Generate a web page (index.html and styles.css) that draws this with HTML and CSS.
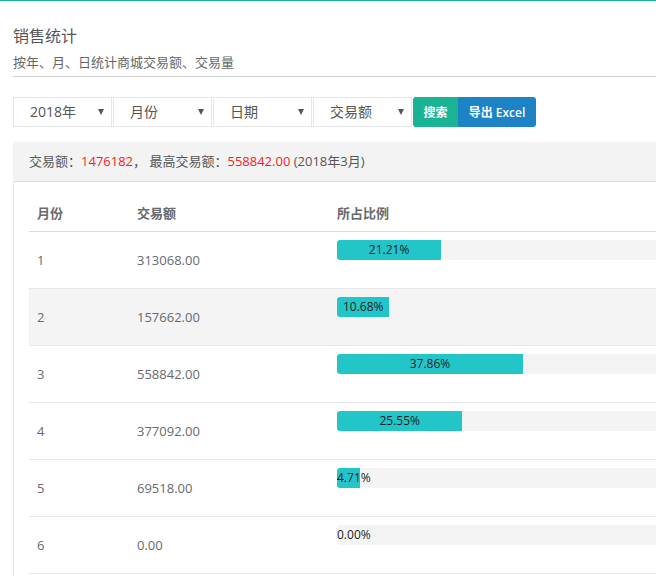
FILE: index.html
```html
<!DOCTYPE html>
<html lang="zh-CN">
<head>
<meta charset="utf-8">
<title>销售统计</title>
<link rel="stylesheet" href="styles.css">
</head>
<body>
<div class="page">
  <div class="inner">
    <div class="head">
      <h2 class="title">销售统计</h2>
      <p class="subtitle">按年、月、日统计商城交易额、交易量</p>
    </div>
    <div class="toolbar">
      <div class="select"><span>2018年</span><i class="caret"></i></div>
      <div class="select"><span>月份</span><i class="caret"></i></div>
      <div class="select"><span>日期</span><i class="caret"></i></div>
      <div class="select"><span>交易额</span><i class="caret"></i></div>
      <div class="btns">
        <button class="btn btn-green">搜索</button>
        <button class="btn btn-blue">导出 Excel</button>
      </div>
    </div>
    <div class="ibox">
      <div class="ibox-title">交易额：<span class="red">1476182</span>， 最高交易额：<span class="red">558842.00</span> (2018年3月)</div>
      <div class="ibox-content">
        <table class="table">
          <colgroup><col class="c1"><col class="c2"><col class="c3"></colgroup>
          <thead>
            <tr><th>月份</th><th>交易额</th><th>所占比例</th></tr>
          </thead>
          <tbody>
            <tr><td>1</td><td>313068.00</td><td><div class="progress"><div class="bar" style="width:21.21%">21.21%</div></div></td></tr>
            <tr class="hover"><td>2</td><td>157662.00</td><td><div class="progress"><div class="bar" style="width:10.68%">10.68%</div></div></td></tr>
            <tr><td>3</td><td>558842.00</td><td><div class="progress"><div class="bar" style="width:37.86%">37.86%</div></div></td></tr>
            <tr><td>4</td><td>377092.00</td><td><div class="progress"><div class="bar" style="width:25.55%">25.55%</div></div></td></tr>
            <tr><td>5</td><td>69518.00</td><td><div class="progress"><div class="bar" style="width:4.71%">4.71%</div></div></td></tr>
            <tr><td>6</td><td>0.00</td><td><div class="progress"><div class="bar" style="width:0%">0.00%</div></div></td></tr>
          </tbody>
        </table>
      </div>
    </div>
  </div>
</div>
</body>
</html>
```
FILE: styles.css
```css
html, body {
  margin: 0;
  padding: 0;
  overflow: hidden;
  background: #fff;
}
body {
  font-family: "Open Sans", "Noto Sans CJK SC", sans-serif;
  font-size: 13px;
  color: #676a6c;
}
.page {
  border-top: 1px solid #1ab394;
  width: 656px;
  height: 575px;
  overflow: hidden;
}
.inner {
  width: 900px;
  padding-left: 13px;
}
.head {
  padding-top: 25px;
  padding-bottom: 4px;
  border-bottom: 1px solid #cfcfcf;
}
.title {
  margin: 0;
  font-size: 16px;
  font-weight: normal;
  line-height: 20px;
  color: #555;
}
.subtitle {
  margin: 6px 0 0;
  font-size: 13px;
  line-height: 20px;
  color: #666;
}
.toolbar {
  display: flex;
  margin-top: 20px;
  height: 30px;
  gap: 1px;
}
.select {
  box-sizing: border-box;
  width: 99px;
  height: 30px;
  border: 1px solid #e5e6e7;
  display: flex;
  align-items: center;
  justify-content: space-between;
  padding: 0 7px 0 16px;
  font-size: 14px;
  color: #555;
  line-height: 20px;
}
.caret {
  width: 0;
  height: 0;
  border-left: 3px solid transparent;
  border-right: 3px solid transparent;
  border-top: 6px solid #555;
}
.btns {
  display: flex;
}
.btn {
  border: 0;
  height: 30px;
  padding: 0;
  color: #fff;
  font-family: "Open Sans", "Noto Sans CJK SC", sans-serif;
  font-size: 12px;
  font-weight: 600;
}
.btn-green {
  width: 45px;
  background: #1ab394;
  border-radius: 3px 0 0 3px;
}
.btn-blue {
  width: 78px;
  background: #1c84c6;
  border-radius: 0 3px 3px 0;
}
.ibox {
  margin-top: 15px;
}
.ibox-title {
  background: #f3f3f3;
  border-bottom: 1px solid #dcdcdc;
  border-radius: 3px 0 0 0;
  height: 39px;
  line-height: 39px;
  padding-left: 16px;
  font-size: 13px;
  color: #555;
}
.red {
  color: #ff1a1a;
}
.ibox-content {
  border-left: 1px solid #e7e7e7;
  padding: 13px 0 20px 15px;
}
.table {
  border-collapse: collapse;
  table-layout: fixed;
  width: 807px;
}
.c1 { width: 100px; }
.c2 { width: 200px; }
.c3 { width: 507px; }
.table th {
  text-align: left;
  font-weight: bold;
  padding: 8px;
  line-height: 20px;
  border-bottom: 1px solid #dcdcdc;
  color: #676a6c;
}
.table td {
  padding: 8px;
  line-height: 20px;
  vertical-align: middle;
  border-top: 1px solid #e7e7e7;
  color: #676a6c;
}
.table tbody tr:first-child td {
  border-top: 0;
}
.table tr.hover td {
  background: #f4f4f4;
}
.table tbody tr:last-child td {
  border-bottom: 1px solid #e7e7e7;
}
.progress {
  height: 20px;
  margin-bottom: 20px;
  background: #f4f4f4;
  border-radius: 3px;
  width: 491px;
  overflow: visible;
}
.bar {
  height: 20px;
  background: #23c6c8;
  border-radius: 3px 0 0 3px;
  color: #222;
  font-size: 12px;
  line-height: 20px;
  text-align: center;
  white-space: nowrap;
}
```
